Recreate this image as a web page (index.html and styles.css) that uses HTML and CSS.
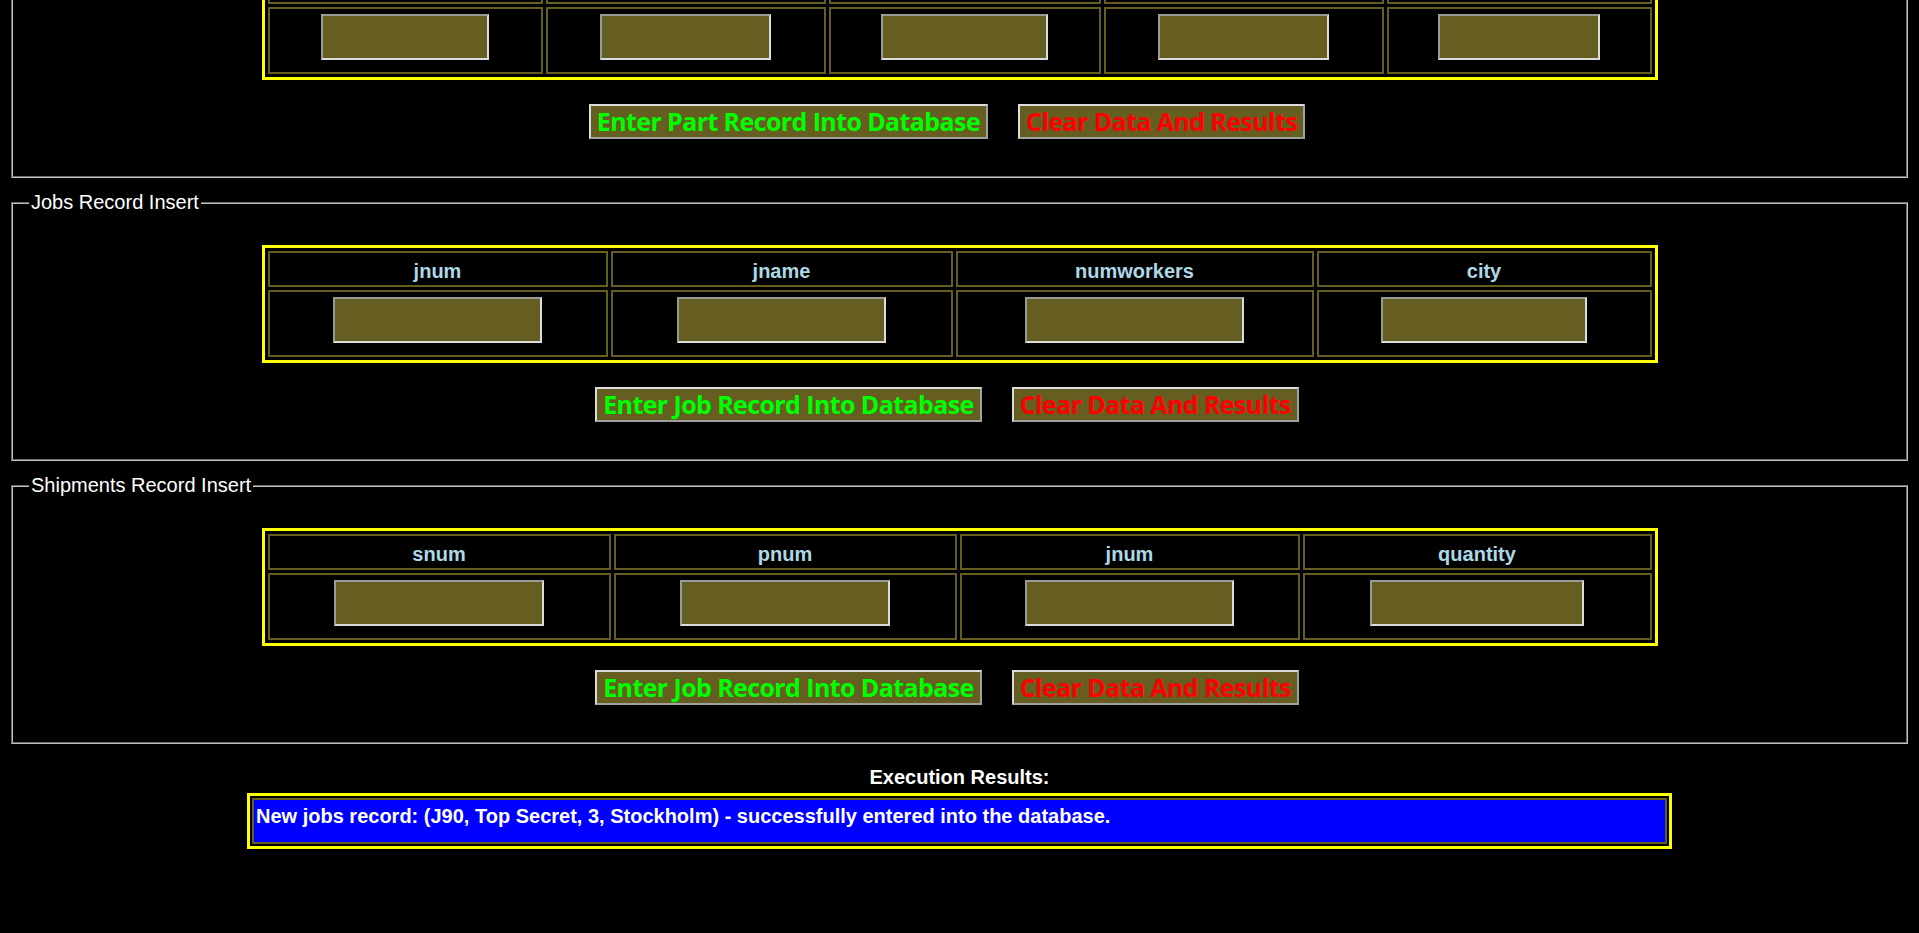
FILE: index.html
```html
<!DOCTYPE html>
<html lang="en">
<head>
<meta charset="utf-8">
<title>Record Insert</title>
<link rel="stylesheet" href="styles.css">
</head>
<body>
<div class="page">
  <fieldset class="panel">
    <legend class="panel-title">Parts Record Insert</legend>
    <table class="entry-table entry-table--parts">
      <tr><th>pnum</th><th>pname</th><th>color</th><th>weight</th><th>city</th></tr>
      <tr>
        <td><input type="text" class="field"></td>
        <td><input type="text" class="field"></td>
        <td><input type="text" class="field"></td>
        <td><input type="text" class="field"></td>
        <td><input type="text" class="field"></td>
      </tr>
    </table>
    <div class="actions">
      <button class="btn btn-submit">Enter Part Record Into Database</button>
      <button class="btn btn-clear">Clear Data And Results</button>
    </div>
  </fieldset>

  <fieldset class="panel">
    <legend class="panel-title">Jobs Record Insert</legend>
    <table class="entry-table entry-table--jobs">
      <tr><th>jnum</th><th>jname</th><th>numworkers</th><th>city</th></tr>
      <tr>
        <td><input type="text" class="field"></td>
        <td><input type="text" class="field"></td>
        <td><input type="text" class="field"></td>
        <td><input type="text" class="field"></td>
      </tr>
    </table>
    <div class="actions">
      <button class="btn btn-submit">Enter Job Record Into Database</button>
      <button class="btn btn-clear">Clear Data And Results</button>
    </div>
  </fieldset>

  <fieldset class="panel">
    <legend class="panel-title">Shipments Record Insert</legend>
    <table class="entry-table entry-table--shipments">
      <tr><th>snum</th><th>pnum</th><th>jnum</th><th>quantity</th></tr>
      <tr>
        <td><input type="text" class="field"></td>
        <td><input type="text" class="field"></td>
        <td><input type="text" class="field"></td>
        <td><input type="text" class="field"></td>
      </tr>
    </table>
    <div class="actions">
      <button class="btn btn-submit">Enter Job Record Into Database</button>
      <button class="btn btn-clear">Clear Data And Results</button>
    </div>
  </fieldset>

  <div class="results">
    <div class="results-title">Execution Results:</div>
    <table class="results-table">
      <tr><td>New jobs record: (J90, Top Secret, 3, Stockholm) - successfully entered into the database.</td></tr>
    </table>
  </div>
</div>
</body>
</html>
```

FILE: styles.css
```css
html, body {
  margin: 0;
  background: #000000;
}

body {
  font-family: "Liberation Sans", Arial, sans-serif;
  color: #ffffff;
}

/* the page is shown scrolled down: the top of the document is above the viewport */
.page {
  margin-top: -92px;
  padding: 0 11px;
}

.panel {
  margin: 0 0 13px;
  padding: 0 16px 37px;
  border: 2px groove #c0c0c0;
  min-inline-size: 0;
}

.panel-title {
  padding: 0 2px;
  font-size: 20px;
  line-height: 23px;
  color: #ffffff;
}

.entry-table {
  width: 1396px;
  margin: 31px auto 0;
  border: 3px solid #ffff00;
  border-spacing: 3px;
  table-layout: fixed;
}

.entry-table th {
  box-sizing: border-box;
  border: 2px solid #665e20;
  padding: 7px 2px 2px;
  font-size: 20px;
  line-height: 23px;
  font-weight: 700;
  color: #add8e6;
  text-align: center;
}

.entry-table td {
  border: 2px solid #665e20;
  padding: 5px 0 12px;
}

.entry-table--parts th:nth-child(1) { width: 275px; }
.entry-table--parts th:nth-child(2) { width: 280px; }
.entry-table--parts th:nth-child(3) { width: 272px; }
.entry-table--parts th:nth-child(4) { width: 280px; }
.entry-table--parts th:nth-child(5) { width: 265px; }

.entry-table--jobs th:nth-child(1) { width: 340px; }
.entry-table--jobs th:nth-child(2) { width: 342px; }
.entry-table--jobs th:nth-child(3) { width: 358px; }
.entry-table--jobs th:nth-child(4) { width: 335px; }

.entry-table--shipments th:nth-child(1) { width: 343px; }
.entry-table--shipments th:nth-child(2) { width: 343px; }
.entry-table--shipments th:nth-child(3) { width: 340px; }
.entry-table--shipments th:nth-child(4) { width: 349px; }

.field {
  display: block;
  box-sizing: border-box;
  width: 62%;
  height: 46px;
  margin: 0 auto;
  padding: 1px 2px;
  background: #665e20;
  border: 2px solid;
  border-color: #9a9a9a #dcdcdc #dcdcdc #9a9a9a;
  color: #ffffff;
  font: 16px "Liberation Sans", Arial, sans-serif;
}

.actions {
  display: flex;
  justify-content: center;
  gap: 30px;
  padding-right: 25px;
  margin-top: 24px;
}

.btn {
  box-sizing: border-box;
  height: 35px;
  padding: 0 6px;
  background: #665e20;
  border: 2px solid;
  border-color: #dcdcdc #a0a0a0 #a0a0a0 #dcdcdc;
  font-family: "Open Sans", "Noto Sans", sans-serif;
  font-weight: 700;
  font-size: 25px;
  letter-spacing: -0.6px;
  line-height: 31px;
  white-space: nowrap;
}

.btn-submit { color: #00ff00; }
.btn-clear { color: #ff0000; }

.results-title {
  margin: 22px 0 4px;
  text-align: center;
  font-size: 20px;
  line-height: 23px;
  font-weight: 700;
  color: #ffffff;
}

.results-table {
  width: 1425px;
  margin: 0 auto;
  border: 3px solid #ffff00;
  border-spacing: 2px;
}

.results-table td {
  border: 2px solid #665e20;
  background: #0000ff;
  padding: 5px 2px 14px;
  font-size: 20px;
  line-height: 23px;
  font-weight: 700;
  color: #ffffff;
  text-align: left;
}
```
